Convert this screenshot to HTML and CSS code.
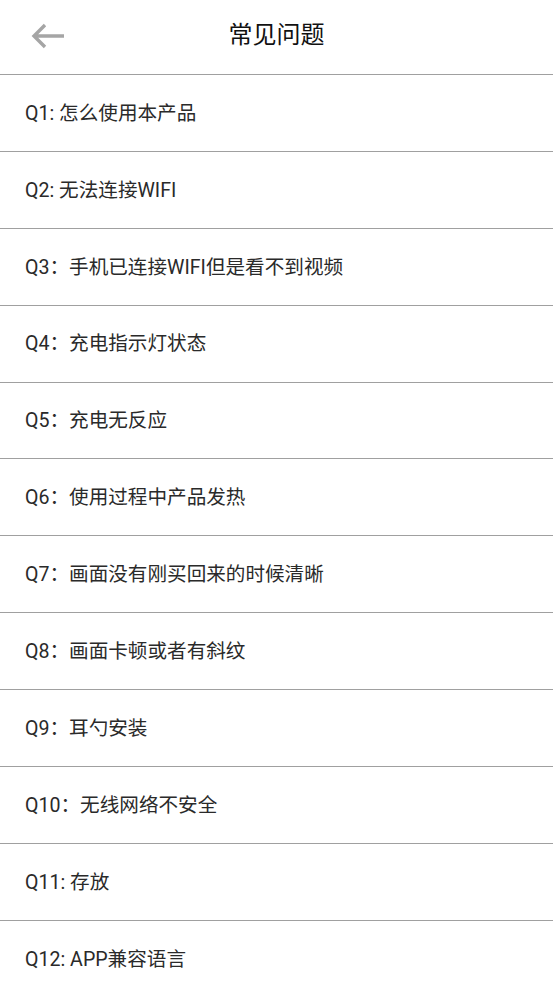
FILE: index.html
```html
<!DOCTYPE html>
<html lang="zh">
<head>
<meta charset="utf-8">
<link rel="stylesheet" href="styles.css">
</head>
<body>
<div class="header">
  <svg class="back" width="36" height="26" viewBox="0 0 36 26">
    <path d="M33 13H4 M14 2L3 13L14 24" fill="none" stroke="#a5a5a5" stroke-width="3.4" stroke-linecap="butt" stroke-linejoin="miter"/>
  </svg>
  <div class="title">常见问题</div>
</div>
<ul class="list">
  <li>Q1: 怎么使用本产品</li>
  <li>Q2: 无法连接WIFI</li>
  <li>Q3：手机已连接WIFI但是看不到视频</li>
  <li>Q4：充电指示灯状态</li>
  <li>Q5：充电无反应</li>
  <li>Q6：使用过程中产品发热</li>
  <li>Q7：画面没有刚买回来的时候清晰</li>
  <li>Q8：画面卡顿或者有斜纹</li>
  <li>Q9：耳勺安装</li>
  <li>Q10：无线网络不安全</li>
  <li>Q11: 存放</li>
  <li>Q12: APP兼容语言</li>
</ul>
</body>
</html>
```
FILE: styles.css
```css
html, body {
  margin: 0;
  padding: 0;
  background: #fff;
}
body {
  font-family: Roboto, "Noto Sans CJK SC", sans-serif;
  color: #222;
}
.header {
  height: 74px;
  border-bottom: 1px solid #a0a0a0;
  display: flex;
  align-items: center;
  justify-content: center;
  position: relative;
}
.back {
  position: absolute;
  left: 31px;
  top: 23px;
}
.title {
  font-size: 24px;
  color: #111;
  margin-top: -10px;
}
.list {
  list-style: none;
  margin: 0;
  padding: 0;
}
.list li {
  height: 72.5px;
  padding-bottom: 3.4px;
  border-bottom: 1px solid #a0a0a0;
  display: flex;
  align-items: center;
  padding-left: 25px;
  font-size: 19.6px;
  font-weight: 400;
  color: #2a2a2a;
  box-sizing: content-box;
}
```
